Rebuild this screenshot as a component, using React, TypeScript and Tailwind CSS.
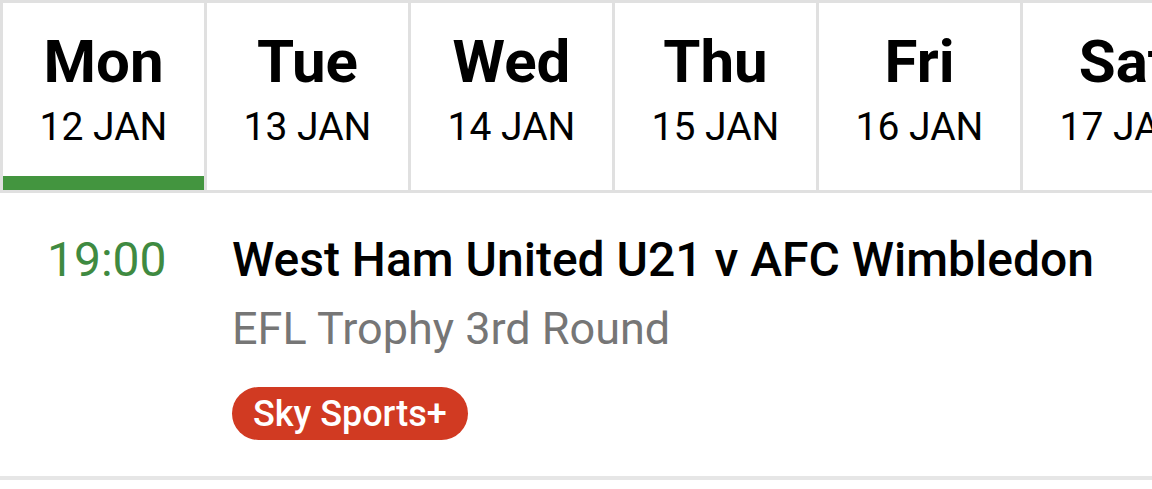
import React from 'react'

const days = [
  { name: 'Mon', date: '12 JAN' },
  { name: 'Tue', date: '13 JAN' },
  { name: 'Wed', date: '14 JAN' },
  { name: 'Thu', date: '15 JAN' },
  { name: 'Fri', date: '16 JAN' },
  { name: 'Sat', date: '17 JAN' },
]

export default function App() {
  const active = 0

  return (
    <div className="w-[1152px] h-[489px] overflow-hidden bg-white font-['Roboto',sans-serif] text-black">
      {/* day tabs, last one runs off the edge */}
      <div className="flex border-t-[3px] border-b-[3px] border-l-[3px] border-[#e0e0e0] h-[193px]">
        {days.map((d, i) => (
          <div
            key={d.name}
            className="w-[204px] shrink-0 border-r-[3px] border-[#e0e0e0] flex flex-col items-center relative"
          >
            <div className="text-[60px] font-bold leading-none mt-[29px] whitespace-nowrap">{d.name}</div>
            <div className="text-[39px] leading-none mt-[16px] whitespace-nowrap">{d.date}</div>
            {i === active && (
              <div className="absolute left-0 right-0 bottom-0 h-[14px] bg-[#43953f]" />
            )}
          </div>
        ))}
      </div>

      {/* fixture */}
      <div className="flex border-b-[4px] border-[#e6e6e6] pt-[39px] h-[287px]">
        <div className="w-[232px] shrink-0 pl-[47px] text-[48px] leading-[56px] text-[#3f8a41]">19:00</div>
        <div className="flex flex-col items-start">
          <div className="text-[48px] leading-[56px] font-medium">West Ham United U21 v AFC Wimbledon</div>
          <div className="text-[45px] leading-[52px] text-[#767676] mt-[15px]">EFL Trophy 3rd Round</div>
          <div className="mt-[32px] h-[53px] px-[21px] rounded-full bg-[#d13a22] text-white text-[36px] font-medium flex items-center">
            Sky Sports+
          </div>
        </div>
      </div>
    </div>
  )
}
